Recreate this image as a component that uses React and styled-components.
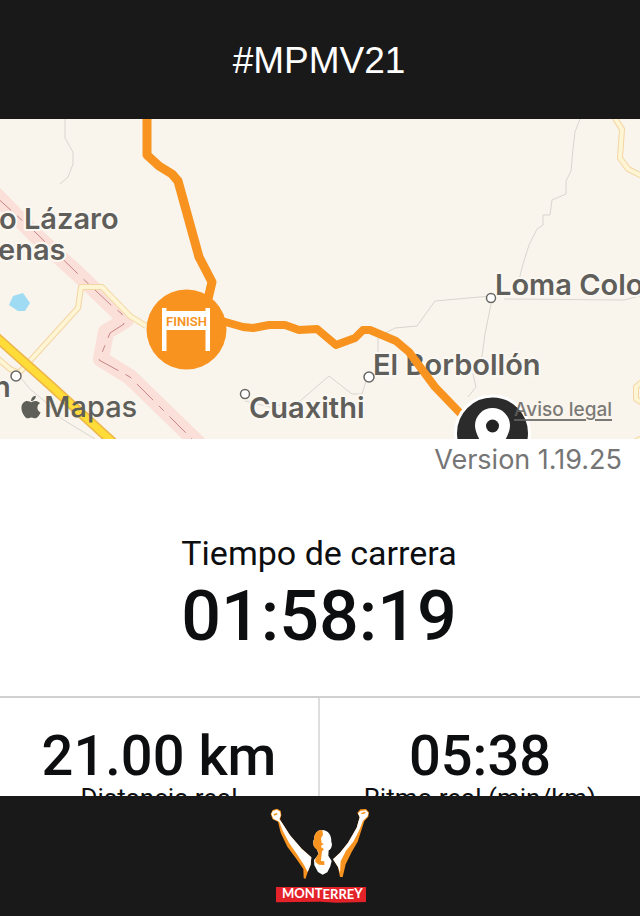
import React from "react";
import styled, { createGlobalStyle } from "styled-components";
import { FaApple } from "react-icons/fa";

const GlobalStyle = createGlobalStyle`
  * { box-sizing: border-box; }
  body { margin: 0; background: #fff; color: #0d0e10; font-family: Roboto, "Liberation Sans", sans-serif; }
  h1, h2, p, dl, dd, dt { margin: 0; font-weight: 400; }
`;

const Screen = styled.div`
  display: flex;
  flex-direction: column;
  height: 100vh;
`;

const TopBar = styled.header`
  flex: none;
  display: flex;
  align-items: center;
  justify-content: center;
  padding: 40px 18px 38px 16px;
  background: #1a1919;
`;

const Title = styled.h1`
  color: #fff;
  font: 400 37px/41px "Liberation Sans", Arial, sans-serif;
`;

const Content = styled.main`
  flex: 1;
  min-height: 0;
  overflow: hidden;
`;

const MapPanel = styled.section`
  position: relative;
  aspect-ratio: 2 / 1;
  overflow: hidden;
  background: #f9f4ec;
`;

const MapDrawing = styled.svg`
  display: block;
  width: 100%;
  height: 100%;
`;

const PlaceName = styled.text`
  font: 600 29px Inter, "Open Sans", sans-serif;
  fill: #5f5e5b;
  stroke: #fbf8f2;
  stroke-width: 4px;
  stroke-linejoin: round;
  paint-order: stroke;
`;

const FinishText = styled.text`
  font: 600 13px Roboto, sans-serif;
  fill: #f7931e;
  text-anchor: middle;
`;

const MapCredit = styled.div`
  position: absolute;
  left: 18px;
  bottom: 16px;
  display: flex;
  align-items: center;
  color: #5f5f5a;
  font: 500 29px/32px Inter, sans-serif;
`;

const LegalLink = styled.a`
  position: absolute;
  right: 28px;
  bottom: 18px;
  color: rgba(100, 99, 96, 0.85);
  font: 500 19px/22px Inter, sans-serif;
  text-decoration: underline;
  text-decoration-thickness: 2px;
  text-underline-offset: 3px;
`;

const Version = styled.p`
  padding: 4px 18px 0;
  color: #757575;
  text-align: right;
  font: 400 27px/34px Inter, sans-serif;
`;

const RaceTime = styled.section`
  display: flex;
  flex-direction: column;
  align-items: center;
  padding: 56px 18px 37px 16px;
`;

const TimeLabel = styled.h2`
  font-size: 34px;
  line-height: 40px;
`;

const TimeValue = styled.p`
  font-size: 70px;
  font-weight: 500;
  line-height: 86px;
`;

const Stats = styled.dl`
  display: grid;
  grid-template-columns: 1fr 1fr;
  border-top: 2px solid #cfd0d0;
`;

const Stat = styled.div`
  display: flex;
  flex-direction: column-reverse;
  align-items: center;
  padding: 26px 0 24px;

  &:first-child {
    border-right: 2px solid #dedede;
  }
`;

const StatValue = styled.dd`
  font-size: 56px;
  font-weight: 500;
  line-height: 64px;
`;

const StatLabel = styled.dt`
  font-size: 26px;
  line-height: 20px;
`;

const BottomBar = styled.footer`
  flex: none;
  display: flex;
  justify-content: center;
  background: #1a1919;
`;

const LogoText = styled.text`
  font: 700 39px Lato, sans-serif;
  fill: #fff;
  text-anchor: middle;
`;

const TRAILS = [
  "M65 0V19L73 33V45L68 58L60 65",
  "M10 246L30 270L48 285L62 300L95 320",
  "M580 0L575 13L573 30L571 52L566 62L566 75L552 81L550 96L543 96L543 106L537 110L529 126L523 145L519 161",
  "M491 177L435 182L417 207L395 209L378 218L378 235",
  "M504 180L624 181L640 177",
  "M491 185L485 215L482 237L473 255L476 268L468 278",
  "M367 259L362 275H352L329 257L300 282L270 288L245 282",
];

const MINOR_ROADS = [
  "M-4 238L10 250L19 254L78 189L81 168H102L130 197L146 207",
  "M614 -2L622 10L620 39L628 50L644 58",
  "M642 263L636 268L636 280L644 285",
  "M632 324L644 318",
];

function RouteMap() {
  return (
    <MapDrawing viewBox="0 0 640 320" preserveAspectRatio="xMidYMid slice" role="img" aria-label="Mapa de la carrera">
      <g fill="none" strokeLinejoin="round">
        <path d="M-10 70L34 115L78 155L126 201L106 213L101 240L130 258L202 328" stroke="#fae0d9" strokeWidth="16" />
        <path d="M-6 76L34 112L78 155L112 187L122 195L124 205L110 214L99 241L130 258L200 328" stroke="#c98484" strokeWidth="1" strokeDasharray="23 8 7 8" />
        {TRAILS.map((d) => <path key={d} d={d} stroke="#d9d6d0" strokeWidth="1" />)}
        {MINOR_ROADS.map((d) => (
          <g key={d}>
            <path d={d} stroke="#f4d5a4" strokeWidth="6" />
            <path d={d} stroke="#fdf5d3" strokeWidth="4" />
          </g>
        ))}
        <path d="M-6 216L50 266L118 328" stroke="#edb64a" strokeWidth="10" />
        <path d="M-6 216L50 266L118 328" stroke="#ffdc37" strokeWidth="7" />
      </g>
      <path d="M9 186L13 177L23 174L30 184L25 192H18Z" fill="#9fdcf3" />
      <PlaceName x="-1" y="110">o Lázaro</PlaceName>
      <PlaceName x="-2" y="141">enas</PlaceName>
      <PlaceName x="-7" y="278">n</PlaceName>
      <PlaceName x="249" y="299">Cuaxithi</PlaceName>
      <PlaceName x="373" y="256">El Borbollón</PlaceName>
      <PlaceName x="495" y="176">Loma Colo</PlaceName>
      <g fill="#fff" stroke="#696866" strokeWidth="1.5">
        <circle cx="16" cy="257" r="5" />
        <circle cx="245" cy="275" r="4.500" />
        <circle cx="369" cy="258" r="5" />
        <circle cx="491" cy="179" r="4.500" />
      </g>
      <g fill="none" stroke="#f7931e" strokeLinejoin="round">
        <path d="M147 -4V36L159 47L172 55L178 62L199 138L212 163L208 180" strokeWidth="9" />
        <path d="M222 202L243 208L253 209L269 206H285L299 211L317 210L336 226L355 219L363 211L370 211L396 222L409 233L435 268L462 296" strokeWidth="8" />
      </g>
      <circle cx="186.500" cy="210.500" r="40" fill="#f7931e" />
      <path d="M162 189h4.500v3h39v-3h4.500v43h-4.500v-21h-39v21h-4.500z" fill="#fff" />
      <FinishText x="186.500" y="206.500">FINISH</FinishText>
      <circle cx="492.500" cy="314" r="37" fill="#2c2b2b" stroke="#fff" strokeWidth="3" />
      <path d="M492.500 289a17.500 17.500 0 0 1 17.500 17.500c0 13-17.500 32-17.500 32s-17.500-19-17.500-32a17.500 17.500 0 0 1 17.500-17.500z" fill="#fff" />
      <circle cx="492.500" cy="307" r="6.500" fill="#242323" />
    </MapDrawing>
  );
}

function Logo() {
  return (
    <svg width="120" height="120" viewBox="0 0 360 360" role="img" aria-label="Maratón Monterrey">
      <g fill="#f7931e">
        <path d="M32 54L38 42L51 38L62 44L64 58L60 70L66 80L90 118L125 158L154 184L152 206L144 226L136 249L131 246L130 219L110 190L82 152L62 110L54 77L38 70Z" />
        <path d="M292 50L301 40L318 39L327 49L325 62L313 75L305 100L293 137L275 168L257 205L248 243L240 243L234 213L219 190L240 170L264 140L290 95L299 64Z" />
      </g>
      <g fill="#fff">
        <path d="M34 54L39 45L51 41L60 47L62 58L58 70L66 80L90 118L125 158L154 184L152 206L143 228L132 207L112 176L88 142L68 104L58 77L40 68Z" />
        <path d="M294 52L302 45L318 43L325 51L323 61L309 74L298 102L280 137L258 164L242 196L240 230L234 213L219 190L240 170L264 140L290 95L299 64Z" />
        <path d="M186 102C205 102 215 118 214 137C219 148 213 160 206 163L205 179L215 195L211 211L202 229L188 236L174 228L163 208L162 192L176 175L170 159C158 151 158 137 162 130C163 112 173 102 186 102Z" />
      </g>
      <g fill="#f7931e">
        <path d="M187 102C172 101 162 113 162 131C157 143 160 153 170 160L176 172L166 189L166 198L177 206L193 207L193 196L183 195L184 184L186 166L192 160L183 153L185 147L192 145L185 141L183 127L189 116Z" />
        <path d="M40 54l11-3 2 4-10 4zM302 52l12-5 4 4-12 4z" />
      </g>
      <path d="M48 273H318V318L230 320L180 317L48 319Z" fill="#e42229" />
      <LogoText x="187" y="306">
        MON<tspan dy="1">T</tspan><tspan dy="2">E</tspan><tspan dy="1">RR</tspan><tspan dy="-2">E</tspan><tspan dy="-2">Y</tspan>
      </LogoText>
    </svg>
  );
}

const STATS = [
  { label: "Distancia real", value: "21.00 km" },
  { label: "Ritmo real (min/km)", value: "05:38" },
];

export default function App() {
  return (
    <Screen>
      <GlobalStyle />
      <TopBar>
        <Title>#MPMV21</Title>
      </TopBar>
      <Content>
        <MapPanel>
          <RouteMap />
          <MapCredit>
            <FaApple size={26} aria-hidden="true" />
            <span>Mapas</span>
          </MapCredit>
          <LegalLink href="#legal">Aviso legal</LegalLink>
        </MapPanel>
        <Version>Version 1.19.25</Version>
        <RaceTime>
          <TimeLabel>Tiempo de carrera</TimeLabel>
          <TimeValue>01:58:19</TimeValue>
        </RaceTime>
        <Stats>
          {STATS.map((s) => (
            <Stat key={s.label}>
              <StatLabel>{s.label}</StatLabel>
              <StatValue>{s.value}</StatValue>
            </Stat>
          ))}
        </Stats>
      </Content>
      <BottomBar>
        <Logo />
      </BottomBar>
    </Screen>
  );
}
